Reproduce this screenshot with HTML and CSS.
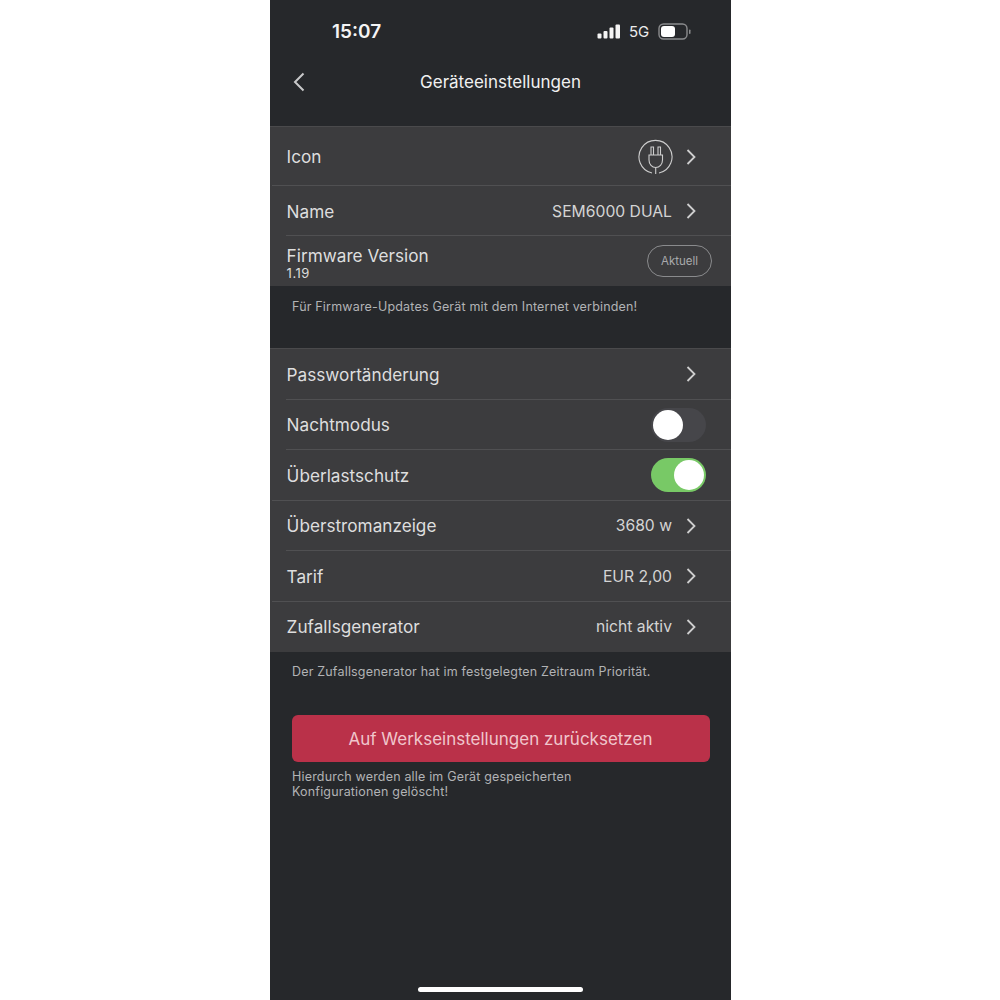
FILE: index.html
```html
<!DOCTYPE html>
<html lang="de">
  <head>
    <meta charset="UTF-8" />
    <meta name="viewport" content="width=device-width, initial-scale=1.0" />
    <title>Geräteeinstellungen</title>
    <link rel="stylesheet" href="styles.css">
  </head>
  <body>
    <main class="phone">
      <div class="statusbar">
        <span class="uhr">15:07</span>
        <div class="status-icons">
          <svg class="signal" width="24" height="15" viewBox="0 0 24 15">
            <rect x="0.5" y="9.5" width="4" height="5" rx="1" />
            <rect x="6.5" y="7" width="4" height="7.5" rx="1" />
            <rect x="12.5" y="3.5" width="4" height="11" rx="1" />
            <rect x="18.5" y="0.5" width="4.5" height="14" rx="1" />
          </svg>
          <span class="netz">5G</span>
          <svg class="batterie" width="33" height="17" viewBox="0 0 33 17">
            <rect x="1" y="1" width="28" height="15" rx="4.5" fill="none" stroke="#8b8c8e" stroke-width="1.4" />
            <rect x="3" y="3" width="14" height="11" rx="3" fill="#fff" />
            <rect x="31" y="6.5" width="1.5" height="4.5" rx="0.7" fill="#8b8c8e" />
          </svg>
        </div>
      </div>

      <header class="navbar">
        <svg class="zurueck" width="12" height="20" viewBox="0 0 12 20">
          <path d="M10.5 1.5 L2 10 L10.5 18.5" />
        </svg>
        <h1>Geräteeinstellungen</h1>
      </header>

      <section class="gruppe">
        <div class="zeile zeile-icon voll">
          <span class="label">Icon</span>
          <svg class="stecker" width="35" height="36" viewBox="0 0 35 36">
            <path class="linie" d="M14 34 A16.5 16.5 0 1 1 21 34" />
            <path class="linie" d="M13 16 V8 H15.5 V16 M20 16 V8 H22.5 V16" />
            <path class="linie" d="M11 16 H24.5 V21 C24.5 25.5 21.5 28.5 17.7 28.5 C14 28.5 11 25.5 11 21 Z" />
            <path class="linie" d="M17.7 28.5 V35" />
          </svg>
          <svg class="pfeil" width="10" height="16" viewBox="0 0 10 16"><path d="M1.5 1 L8.5 8 L1.5 15" /></svg>
        </div>
        <div class="zeile zeile-name">
          <span class="label">Name</span>
          <span class="wert">SEM6000 DUAL</span>
          <svg class="pfeil" width="10" height="16" viewBox="0 0 10 16"><path d="M1.5 1 L8.5 8 L1.5 15" /></svg>
        </div>
        <div class="zeile zeile-firmware">
          <div class="firmware-text">
            <span class="label">Firmware Version</span>
            <span class="version">1.19</span>
          </div>
          <span class="aktuell">Aktuell</span>
        </div>
      </section>
      <p class="hinweis hinweis-firmware">Für Firmware-Updates Gerät mit dem Internet verbinden!</p>

      <section class="gruppe">
        <div class="zeile">
          <span class="label">Passwortänderung</span>
          <svg class="pfeil" width="10" height="16" viewBox="0 0 10 16"><path d="M1.5 1 L8.5 8 L1.5 15" /></svg>
        </div>
        <div class="zeile">
          <span class="label">Nachtmodus</span>
          <span class="schalter"><span class="knopf"></span></span>
        </div>
        <div class="zeile voll">
          <span class="label">Überlastschutz</span>
          <span class="schalter an"><span class="knopf"></span></span>
        </div>
        <div class="zeile">
          <span class="label">Überstromanzeige</span>
          <span class="wert">3680 w</span>
          <svg class="pfeil" width="10" height="16" viewBox="0 0 10 16"><path d="M1.5 1 L8.5 8 L1.5 15" /></svg>
        </div>
        <div class="zeile voll">
          <span class="label">Tarif</span>
          <span class="wert">EUR 2,00</span>
          <svg class="pfeil" width="10" height="16" viewBox="0 0 10 16"><path d="M1.5 1 L8.5 8 L1.5 15" /></svg>
        </div>
        <div class="zeile">
          <span class="label">Zufallsgenerator</span>
          <span class="wert">nicht aktiv</span>
          <svg class="pfeil" width="10" height="16" viewBox="0 0 10 16"><path d="M1.5 1 L8.5 8 L1.5 15" /></svg>
        </div>
      </section>
      <p class="hinweis hinweis-zufall">Der Zufallsgenerator hat im festgelegten Zeitraum Priorität.</p>

      <button class="reset">Auf Werkseinstellungen zurücksetzen</button>
      <p class="hinweis hinweis-reset">Hierdurch werden alle im Gerät gespeicherten<br />Konfigurationen gelöscht!</p>

      <div class="home-balken"></div>
    </main>
  </body>
</html>
```

FILE: styles.css
```css
* {
  box-sizing: border-box;
}

body {
  margin: 0;
  background-color: #fff;
  font-family: Inter, "Liberation Sans", sans-serif;
}

.phone {
  position: relative;
  width: 461px;
  height: 1000px;
  margin-left: 270px;
  background-color: #26282b;
  color: #e6e6e6;
  overflow: hidden;
}

.statusbar {
  display: flex;
  justify-content: space-between;
  align-items: center;
  height: 62px;
  padding: 0 40px 0 62px;
}

.uhr {
  font-size: 19px;
  font-weight: 600;
  color: #f4f4f4;
}

.status-icons {
  display: flex;
  align-items: center;
  gap: 8px;
}

.signal {
  fill: #f4f4f4;
}

.netz {
  width: 21px;
  font-size: 15px;
  color: #ececec;
}

.navbar {
  display: flex;
  align-items: center;
  justify-content: center;
  position: relative;
  height: 40px;
}

.navbar h1 {
  margin: 0;
  font-size: 17px;
  font-weight: 400;
  color: #f0f0f0;
}

.zurueck {
  position: absolute;
  left: 23px;
  top: 10px;
  fill: none;
  stroke: #c8c9ca;
  stroke-width: 2;
}

.gruppe {
  background-color: #3c3c3e;
  border-top: 1px solid #4a4a4c;
}

.gruppe:first-of-type {
  margin-top: 24px;
}

.zeile {
  position: relative;
  display: flex;
  align-items: center;
  height: 50.5px;
  padding: 0 35px 0 16.6px;
}

.zeile::after {
  content: "";
  position: absolute;
  left: 16px;
  right: 0;
  bottom: 0;
  height: 1px;
  background-color: #505052;
}

.zeile:last-child::after {
  display: none;
}

.zeile.voll::after {
  left: 2px;
}

.zeile-icon {
  height: 59px;
}

.zeile-name {
  height: 50px;
}

.zeile-firmware {
  height: 50px;
  padding-right: 19px;
}

.label {
  font-size: 17.2px;
  color: #dedede;
  margin-right: auto;
}

.wert {
  font-size: 15.7px;
  color: #d4d4d4;
  margin-right: 14px;
}

.pfeil {
  flex: none;
  fill: none;
  stroke: #cfcfcf;
  stroke-width: 1.8;
}

.stecker {
  margin-right: 13px;
}

.linie {
  fill: none;
  stroke: #cdcdcd;
  stroke-width: 1.1;
}

.firmware-text {
  display: flex;
  flex-direction: column;
  margin-right: auto;
  padding-top: 4px;
}

.version {
  font-size: 13px;
  color: #dcdcdc;
  line-height: 15px;
  letter-spacing: 0.5px;
}

.aktuell {
  width: 65px;
  height: 32px;
  line-height: 30px;
  text-align: center;
  border: 1px solid #8a8b8d;
  border-radius: 16px;
  font-size: 11.5px;
  color: #a9aaac;
}

.schalter {
  display: flex;
  align-items: center;
  width: 55px;
  height: 34px;
  margin-right: -10px;
  padding: 2px;
  border-radius: 17px;
  background-color: #46464a;
}

.schalter.an {
  justify-content: flex-end;
  background-color: #78c966;
}

.knopf {
  width: 30px;
  height: 30px;
  border-radius: 50%;
  background-color: #fff;
}

.hinweis {
  margin: 0;
  padding: 0 22px;
  font-size: 12.5px;
  line-height: 15px;
  letter-spacing: 0.18px;
  color: #b2b3b5;
}

.hinweis-firmware {
  padding-top: 13px;
  height: 62px;
}

.hinweis-zufall {
  padding-top: 12px;
  height: 63px;
}

.reset {
  display: block;
  width: 418px;
  height: 47px;
  margin-left: 21.5px;
  padding-top: 2px;
  border: none;
  border-radius: 6px;
  background-color: #ba3149;
  color: #f0c6cc;
  font-family: inherit;
  font-size: 17px;
}

.hinweis-reset {
  padding-top: 7px;
}

.home-balken {
  position: absolute;
  left: 148px;
  bottom: 8px;
  width: 165px;
  height: 5px;
  border-radius: 3px;
  background-color: #fff;
}
```
